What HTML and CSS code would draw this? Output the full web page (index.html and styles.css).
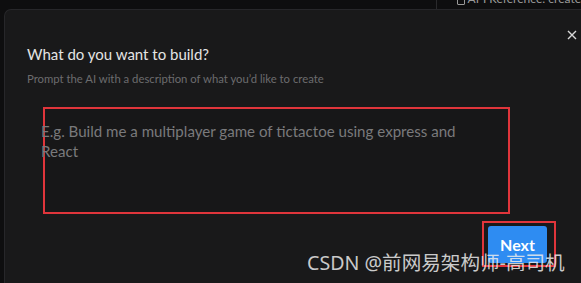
FILE: index.html
```html
<!DOCTYPE html>
<html lang="en">
<head>
<meta charset="utf-8">
<title>What do you want to build?</title>
<link rel="stylesheet" href="styles.css">
</head>
<body>
<div class="page">
  <div class="topbar">
    <div class="topbar-left"></div>
    <div class="topbar-right">
      <span class="doc-icon"></span><span class="doc-text">API Reference: create</span>
    </div>
  </div>
  <div class="modal">
    <button class="close" aria-label="Close">
      <svg width="10" height="10" viewBox="0 0 10 10"><path d="M1 1L9 9M9 1L1 9" stroke="#d8d8d8" stroke-width="1.4" fill="none"/></svg>
    </button>
    <h2 class="title">What do you want to build?</h2>
    <p class="subtitle">Prompt the AI with a description of what you’d like to create</p>
    <div class="prompt-box">
      <textarea class="prompt" placeholder="E.g. Build me a multiplayer game of tictactoe using express and React"></textarea>
    </div>
    <div class="actions">
      <div class="mark">
        <button class="next">Next</button>
      </div>
    </div>
  </div>
  <div class="watermark">CSDN @前网易架构师-高司机</div>
</div>
</body>
</html>
```
FILE: styles.css
```css
* { box-sizing: border-box; }
html, body { margin: 0; padding: 0; }
body {
  width: 581px;
  height: 283px;
  overflow: hidden;
  background: #0e0e0f;
  font-family: "Lato", "Noto Sans", sans-serif;
}
.page {
  position: relative;
  width: 581px;
  height: 283px;
  display: flex;
  flex-direction: column;
}
.topbar {
  height: 9px;
  flex: none;
  display: flex;
  overflow: hidden;
}
.topbar-left {
  width: 447px;
  border-right: 1px solid #2a2a2c;
}
.topbar-right {
  display: flex;
  align-items: flex-end;
  padding-left: 20px;
  gap: 3px;
  color: #9a9a9a;
  font-size: 12px;
  line-height: 12px;
}
.doc-icon {
  width: 8px;
  height: 10px;
  border: 1px solid #9a9a9a;
  border-radius: 1px;
  margin-bottom: 4px;
}
.doc-text {
  margin-bottom: 4px;
  white-space: nowrap;
}
.modal {
  position: relative;
  flex: 1;
  margin-left: 4px;
  background: #19191a;
  border: 1px solid #27272a;
  border-right: none;
  border-bottom: none;
  border-radius: 7px 0 0 0;
  padding: 33px 0 0 22px;
}
.close {
  position: absolute;
  top: 20px;
  right: 4px;
  width: 10px;
  height: 10px;
  padding: 0;
  border: 0;
  background: none;
  display: flex;
}
.title {
  margin: 0;
  font-size: 15px;
  line-height: 22px;
  font-weight: 400;
  color: #e4e4e4;
}
.subtitle {
  margin: 6px 0 0;
  font-size: 11.3px;
  line-height: 15px;
  color: #6c6c6e;
}
.prompt-box {
  margin: 21px 0 0 16px;
  width: 467px;
  height: 107px;
  border: 2px solid #e0353b;
  background: #171718;
}
.prompt {
  display: block;
  width: calc(100% + 4px);
  height: 100%;
  margin: 0 0 0 -4px;
  padding: 12px 44px 0 0;
  border: 0;
  outline: none;
  resize: none;
  overflow: hidden;
  background: transparent;
  color: #e4e4e4;
  font-family: inherit;
  font-size: 15.1px;
  line-height: 20px;
}
.prompt::placeholder { color: #7a7a7c; }
.actions {
  display: flex;
  width: 529px;
  justify-content: flex-end;
  margin-top: 7px;
}
.mark {
  border: 2px solid #e0353b;
  padding: 3px 7px 0 4px;
  height: 46px;
}
.next {
  width: 59px;
  height: 37px;
  border: 0;
  border-radius: 3px;
  background: #2e8cf2;
  color: #ffffff;
  font-family: inherit;
  font-size: 16px;
  font-weight: 700;
  padding: 0;
}
.watermark {
  position: absolute;
  left: 307px;
  top: 251px;
  font-family: "Noto Sans", "Noto Sans CJK SC", sans-serif;
  font-size: 19.6px;
  line-height: 24px;
  color: rgba(235, 235, 235, 0.85);
  white-space: nowrap;
  letter-spacing: 0;
}
```
